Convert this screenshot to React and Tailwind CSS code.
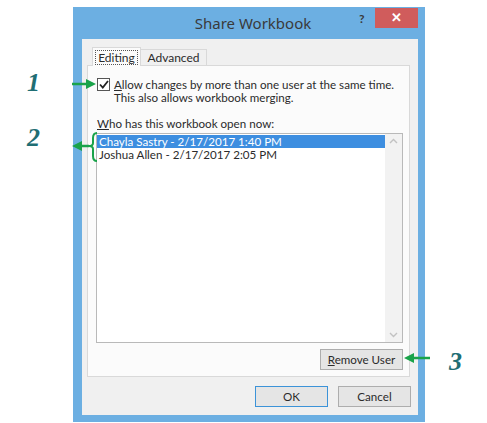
import { useState } from 'react';

const USERS = [
    'Chayla Sastry - 2/17/2017 1:40 PM',
    'Joshua Allen - 2/17/2017 2:05 PM',
];

export default function App() {
    const [allow, setAllow] = useState(true);
    const [selected, setSelected] = useState(0);

    return (
        <div className="relative h-[423px] w-[487px] overflow-hidden bg-white pl-[73px] pt-[7px] font-['Lato',sans-serif] text-[#2b2b2b]">
            <div className="flex h-[415px] w-[352px] flex-col bg-[#6cafe2]">
                <div className="relative flex h-[32px] items-center justify-center">
                    <span className="ml-[8px] font-['Noto_Sans',sans-serif] text-[15px] text-[#3a3a3a]">Share Workbook</span>
                    <span className="absolute left-[286px] top-[3px] text-[12px] font-bold text-[#3a3a3a]">?</span>
                    <button type="button" className="absolute left-[302px] top-[1px] flex h-[20px] w-[43px] items-center justify-center bg-[#d05c5c] text-[13px] font-bold text-white">✕</button>
                </div>

                <div className="ml-[9px] mr-[7px] mb-[7px] flex flex-1 flex-col bg-[#f0f0f0] px-[5px] pt-[8px]">
                    <div className="flex items-end pl-[5px]">
                        <div className="relative z-10 -mb-px flex h-[19px] w-[49px] items-center justify-center border border-b-0 border-[#d9d9d9] bg-[#fbfbfb] text-[12px]">
                            <span className="border border-dotted border-[#555] px-[2px] leading-[13px]">Editing</span>
                        </div>
                        <div className="flex h-[16px] w-[66px] items-center justify-center border border-b-0 border-l-0 border-[#d9d9d9] bg-[#f0f0f0] text-[12px]">Advanced</div>
                    </div>

                    <div className="flex h-[312px] w-[323px] flex-col border border-[#d9d9d9] bg-[#fbfbfb] pl-[8px] pr-[6px] pt-[12px]">
                        <label className="ml-px flex items-start gap-[4px] whitespace-nowrap text-[11.6px] leading-[13px]">
                            <span
                                className="flex h-[13px] w-[13px] shrink-0 items-center justify-center border border-[#555] bg-white"
                                onClick={() => setAllow(!allow)}
                            >
                                {allow && (
                                    <svg width="10" height="9" viewBox="0 0 10 9">
                                        <path d="M1 4.5 L3.8 7.5 L9 1" fill="none" stroke="#222" strokeWidth="1.8" />
                                    </svg>
                                )}
                            </span>
                            <span>
                                <u>A</u>llow changes by more than one user at the same time.
                                <br />
                                This also allows workbook merging.
                            </span>
                        </label>

                        <div className="ml-px mt-[13px] whitespace-nowrap text-[11.6px] leading-[13px]"><u>W</u>ho has this workbook open now:</div>

                        <div className="mt-[3px] flex h-[210px] w-[307px] border border-[#b9b9b9] bg-white">
                            <div className="flex-1 pt-[1px] text-[11.6px] leading-[13px]">
                                {USERS.map((u, i) => (
                                    <div
                                        key={u}
                                        onClick={() => setSelected(i)}
                                        className={i === selected ? 'bg-[#3d8ee0] pl-[2px] text-white' : 'pl-[2px]'}
                                    >
                                        {u}
                                    </div>
                                ))}
                            </div>
                            <div className="flex w-[17px] flex-col items-center justify-between bg-[#f2f2f2] py-[4px] text-[#c2c2c2]">
                                <svg width="9" height="6" viewBox="0 0 9 6"><path d="M1 5 L4.5 1.5 L8 5" fill="none" stroke="currentColor" strokeWidth="1.4" /></svg>
                                <svg width="9" height="6" viewBox="0 0 9 6"><path d="M1 1 L4.5 4.5 L8 1" fill="none" stroke="currentColor" strokeWidth="1.4" /></svg>
                            </div>
                        </div>

                        <div className="mt-[6px] flex justify-end">
                            <button type="button" className="h-[21px] w-[83px] border border-[#adadad] bg-[#e5e5e5] text-[11.6px]">
                                <u>R</u>emove User
                            </button>
                        </div>
                    </div>

                    <div className="mt-[9px] mr-[2px] flex justify-end gap-[10px]">
                        <button type="button" className="h-[21px] w-[73px] border border-[#3c93d8] bg-[#e5e5e5] text-[11.6px]">OK</button>
                        <button type="button" className="h-[21px] w-[73px] border border-[#adadad] bg-[#e5e5e5] text-[11.6px]">Cancel</button>
                    </div>
                </div>
            </div>

            <Callout n="1" className="left-[27px] top-[70px]" />
            <Callout n="2" className="left-[27px] top-[125px]" />
            <Callout n="3" className="left-[449px] top-[349px]" />

            <svg className="pointer-events-none absolute left-0 top-0" width="487" height="423" viewBox="0 0 487 423">
                <g stroke="#1aa34a" fill="#1aa34a">
                    <line x1="72" y1="84" x2="88" y2="84" strokeWidth="2.5" />
                    <polygon points="86,79 96,84 86,89" stroke="none" />
                    <line x1="89" y1="146" x2="80" y2="146" strokeWidth="2.5" />
                    <polygon points="72,146 82,141 82,151" stroke="none" />
                    <path d="M97 133 Q93 133 93 138 L93 143 Q93 146 89 146 Q93 146 93 149 L93 156 Q93 161 97 161" fill="none" strokeWidth="2" />
                    <line x1="413" y1="358" x2="430" y2="358" strokeWidth="2.5" />
                    <polygon points="404,358 414,353 414,363" stroke="none" />
                </g>
            </svg>
        </div>
    );
}

function Callout({ n, className }) {
    return (
        <span className={`absolute font-['Liberation_Serif',serif] text-[26px] font-bold italic leading-none text-[#1f6e74] ${className}`}>
            {n}
        </span>
    );
}
